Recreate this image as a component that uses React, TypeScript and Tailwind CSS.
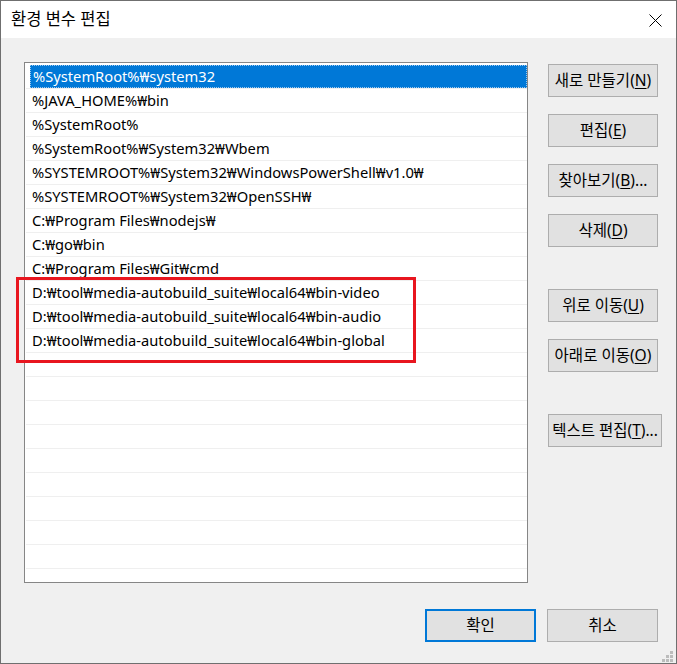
import React from 'react';

const paths = [
  '%SystemRoot%₩system32',
  '%JAVA_HOME%₩bin',
  '%SystemRoot%',
  '%SystemRoot%₩System32₩Wbem',
  '%SYSTEMROOT%₩System32₩WindowsPowerShell₩v1.0₩',
  '%SYSTEMROOT%₩System32₩OpenSSH₩',
  'C:₩Program Files₩nodejs₩',
  'C:₩go₩bin',
  'C:₩Program Files₩Git₩cmd',
  'D:₩tool₩media-autobuild_suite₩local64₩bin-video',
  'D:₩tool₩media-autobuild_suite₩local64₩bin-audio',
  'D:₩tool₩media-autobuild_suite₩local64₩bin-global',
];

const TOTAL_ROWS = 22;

function Btn({ label, mn, tail = '', wide = false }: { label: string; mn: string; tail?: string; wide?: boolean }) {
  return (
    <button
      className={`h-[33px] ${wide ? 'w-[114px]' : 'w-[110px]'} shrink-0 border border-[#adadad] bg-[#e1e1e1] text-[15.5px] text-black flex items-center justify-center whitespace-nowrap`}
    >
      {label}(<span className="underline underline-offset-2">{mn}</span>){tail}
    </button>
  );
}

export default function App() {
  return (
    <div
      className="relative w-[677px] h-[664px] border border-[#6f6f6f] bg-[#f0f0f0] flex flex-col overflow-hidden"
      style={{ fontFamily: '"Noto Sans", "Noto Sans CJK KR", sans-serif' }}
    >
      {/* title bar */}
      <div className="h-[37px] bg-white flex items-center justify-between pl-[10px] pr-[14px] shrink-0">
        <span className="text-[16.5px] text-black">환경 변수 편집</span>
        <svg width="13" height="13" viewBox="0 0 13 13" className="mt-[1px]">
          <path d="M0.5 0.5 L12.5 12.5 M12.5 0.5 L0.5 12.5" stroke="#000" strokeWidth="1" fill="none" />
        </svg>
      </div>

      <div className="flex-1 flex flex-col pl-[23px] pr-[18px]">
        <div className="flex mt-[24px] gap-[20px]">
          {/* path list */}
          <div className="w-[504px] h-[521px] border border-[#868686] bg-white pt-[2px] overflow-hidden shrink-0">
            {Array.from({ length: TOTAL_ROWS }).map((_, i) => {
              const text = paths[i];
              const selected = i === 0;
              return (
                <div key={i} className="h-[24px] border-b border-[#efefef] ml-[1px] flex">
                  <div
                    className={`flex-1 ml-[4px] pl-[2px] flex items-center text-[14.7px] whitespace-nowrap ${
                      selected ? 'bg-[#0078d7] text-white border border-dotted border-[#9cc8ee]' : 'text-black'
                    }`}
                  >
                    {text}
                  </div>
                </div>
              );
            })}
          </div>

          {/* side buttons */}
          <div className="flex flex-col items-start pt-[2px]">
            <Btn label="새로 만들기" mn="N" />
            <div className="h-[17px]" />
            <Btn label="편집" mn="E" />
            <div className="h-[17px]" />
            <Btn label="찾아보기" mn="B" tail="..." />
            <div className="h-[17px]" />
            <Btn label="삭제" mn="D" />
            <div className="h-[42px]" />
            <Btn label="위로 이동" mn="U" />
            <div className="h-[17px]" />
            <Btn label="아래로 이동" mn="O" />
            <div className="h-[42px]" />
            <Btn label="텍스트 편집" mn="T" tail="..." wide />
          </div>
        </div>

        {/* dialog buttons */}
        <div className="flex justify-end gap-[11px] mt-[26px]">
          <button className="h-[33px] w-[111px] border-2 border-[#0078d7] bg-[#e1e1e1] text-[15.5px] text-black">확인</button>
          <button className="h-[33px] w-[111px] border border-[#adadad] bg-[#e1e1e1] text-[15.5px] text-black">취소</button>
        </div>
      </div>

      {/* annotation box */}
      <div className="absolute left-[15px] top-[276px] w-[400px] h-[86px] border-[3px] border-[#e8161f]" />

      {/* resize grip */}
      <svg width="12" height="12" viewBox="0 0 12 12" className="absolute right-[2px] bottom-[0px]">
        <rect x="8" y="0" width="3" height="3" fill="#bcbcbc" />
        <rect x="4" y="4" width="3" height="3" fill="#bcbcbc" />
        <rect x="8" y="4" width="3" height="3" fill="#bcbcbc" />
        <rect x="0" y="8" width="3" height="3" fill="#bcbcbc" />
        <rect x="4" y="8" width="3" height="3" fill="#bcbcbc" />
        <rect x="8" y="8" width="3" height="3" fill="#bcbcbc" />
      </svg>
    </div>
  );
}
